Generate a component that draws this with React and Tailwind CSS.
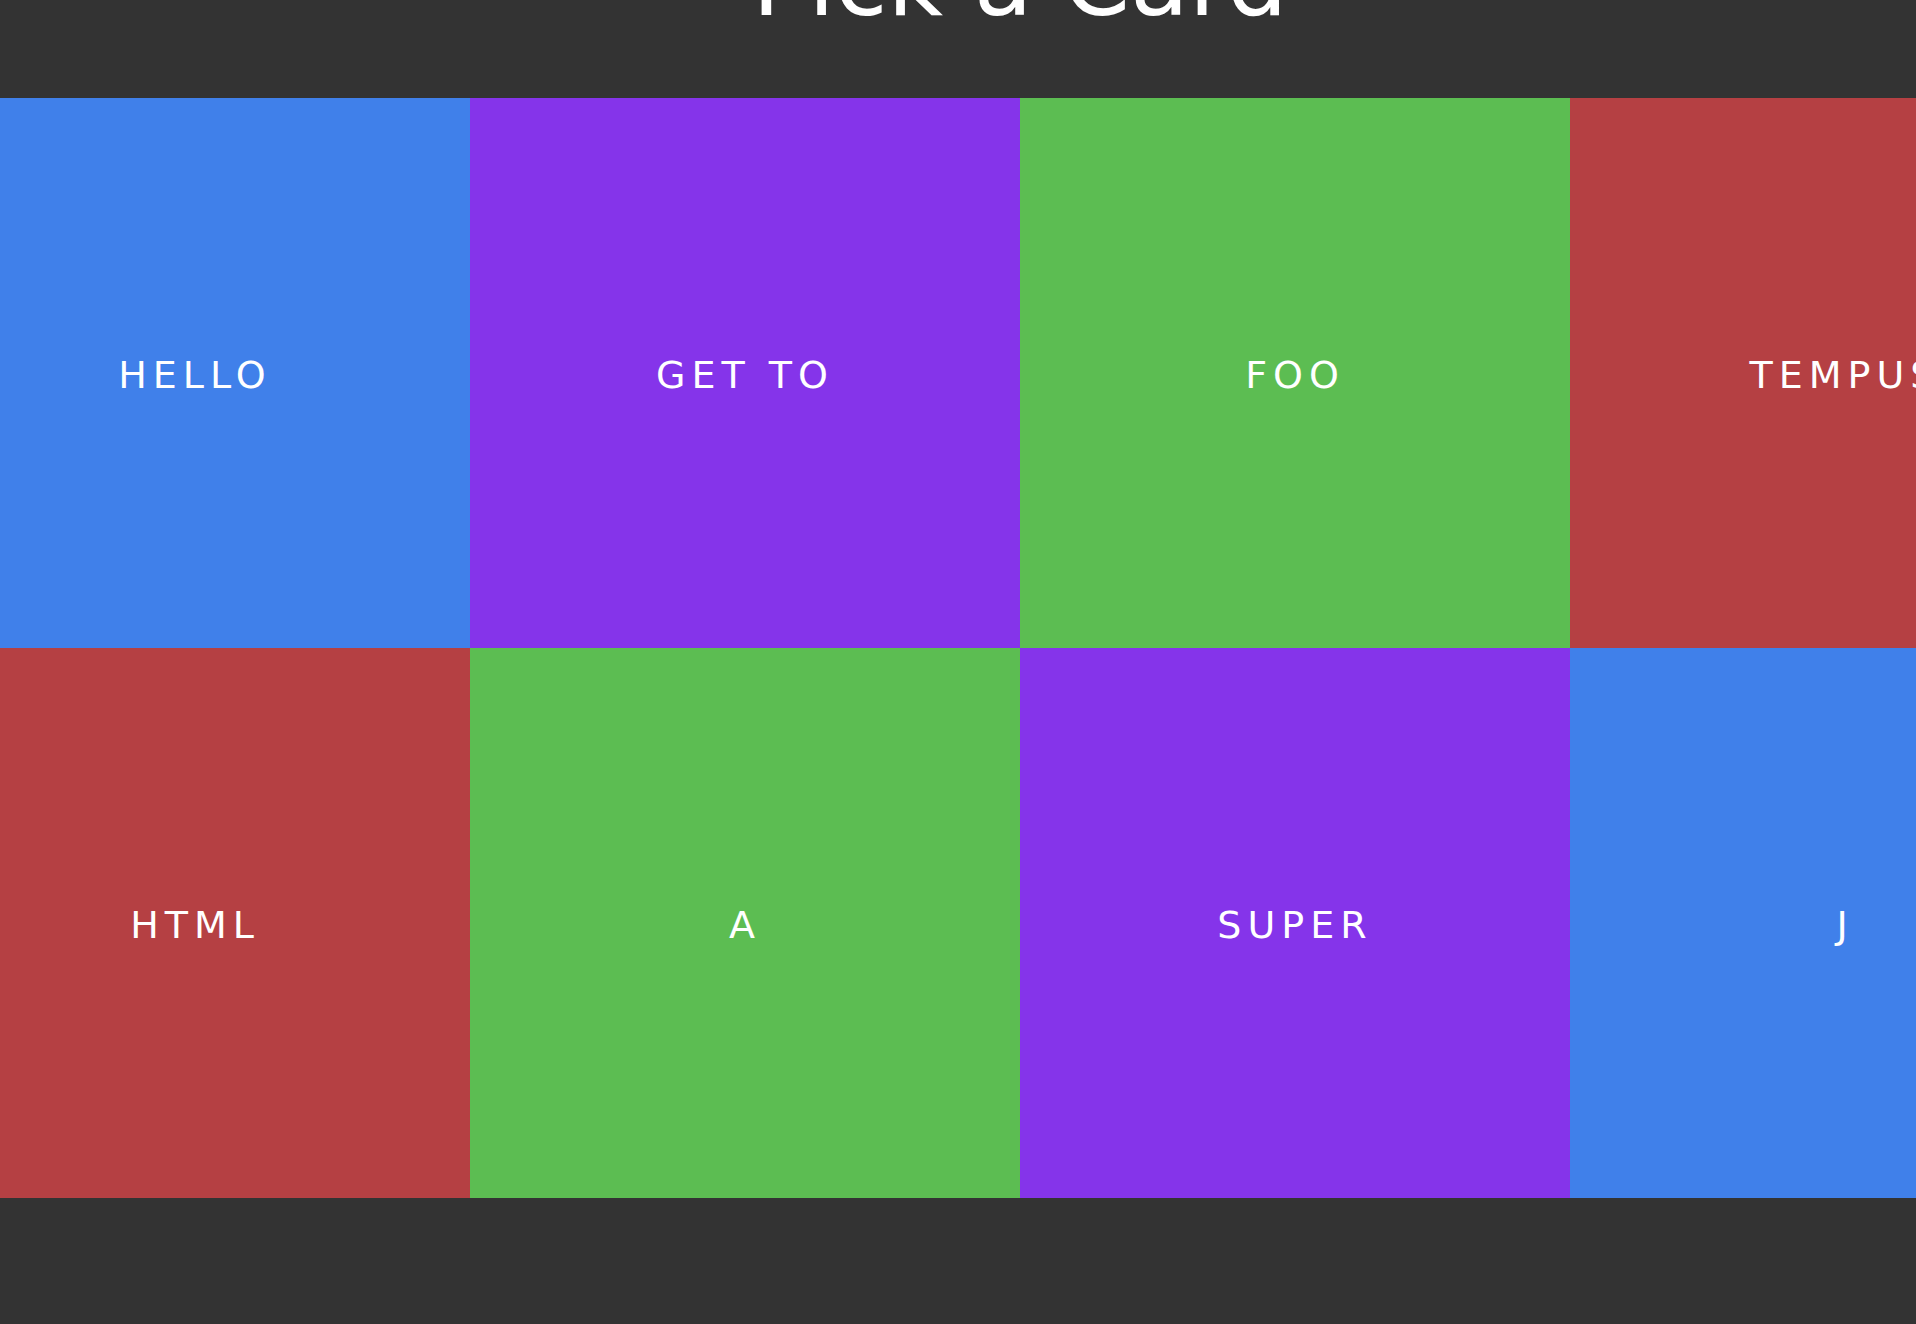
import React from "react";

const cards = [
  { label: "HELLO", bg: "bg-[#4080ea]" },
  { label: "GET TO", bg: "bg-[#8534ea]" },
  { label: "FOO", bg: "bg-[#5cbd52]" },
  { label: "TEMPUS", bg: "bg-[#b54043]" },
  { label: "HTML", bg: "bg-[#b54043]" },
  { label: "A", bg: "bg-[#5cbd52]" },
  { label: "SUPER", bg: "bg-[#8534ea]" },
  { label: "J", bg: "bg-[#4080ea]" },
];

export default function App() {
  return (
    <div
      className="w-full h-[1324px] overflow-hidden bg-[#333333] text-white"
      style={{ fontFamily: '"DejaVu Sans", Verdana, sans-serif' }}
    >
      <div className="w-[2200px] ml-[-80px]">
        <h1 className="mt-[-66px] h-[96px] text-center text-[96px] leading-none font-normal">
          Pick a Card
        </h1>
        <div className="mt-[68px] grid grid-cols-[repeat(4,550px)] grid-rows-[repeat(2,550px)]">
          {cards.map((c) => (
            <div
              key={c.label}
              className={`${c.bg} flex items-center justify-center`}
            >
              <span className="text-[38px] tracking-[6px] pt-[4px]">
                {c.label}
              </span>
            </div>
          ))}
        </div>
      </div>
    </div>
  );
}
